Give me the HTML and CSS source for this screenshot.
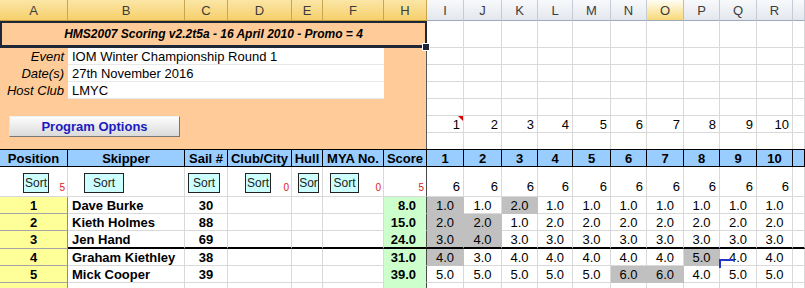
FILE: index.html
```html
<!DOCTYPE html>
<html lang="en">
<head>
    <meta charset="UTF-8">
    <title>HMS2007 Scoring</title>
    <link rel="stylesheet" href="styles.css">
</head>
<body>

    <div class="sheet">
        <!-- Column letters -->
        <div class="c colhead sel">A</div>
        <div class="c colhead sel">B</div>
        <div class="c colhead sel">C</div>
        <div class="c colhead sel">D</div>
        <div class="c colhead sel">E</div>
        <div class="c colhead sel">F</div>
        <div class="c colhead sel hcol">H</div>
        <div class="c colhead">I</div>
        <div class="c colhead">J</div>
        <div class="c colhead">K</div>
        <div class="c colhead">L</div>
        <div class="c colhead">M</div>
        <div class="c colhead">N</div>
        <div class="c colhead hot">O</div>
        <div class="c colhead">P</div>
        <div class="c colhead">Q</div>
        <div class="c colhead">R</div>
        <div class="c colhead"></div>

        <!-- Event details panel -->
        <div class="panel">
            <div class="title">HMS2007 Scoring v2.2t5a - 16 April 2010 - Promo = 4</div>
            <div class="info">
                <div class="label">Event</div>
                <div class="value">IOM Winter Championship Round 1</div>
                <div class="label">Date(s)</div>
                <div class="value">27th November 2016</div>
                <div class="label">Host Club</div>
                <div class="value">LMYC</div>
            </div>
            <button type="button" class="options-btn">Program Options</button>
        </div>

        <!-- Empty cells right of the panel -->
        <div class="c"></div><div class="c"></div><div class="c"></div><div class="c"></div><div class="c"></div><div class="c"></div><div class="c"></div><div class="c"></div><div class="c"></div><div class="c"></div><div class="c"></div>
        <div class="c"></div><div class="c"></div><div class="c"></div><div class="c"></div><div class="c"></div><div class="c"></div><div class="c"></div><div class="c"></div><div class="c"></div><div class="c"></div><div class="c"></div>
        <div class="c"></div><div class="c"></div><div class="c"></div><div class="c"></div><div class="c"></div><div class="c"></div><div class="c"></div><div class="c"></div><div class="c"></div><div class="c"></div><div class="c"></div>
        <div class="c"></div><div class="c"></div><div class="c"></div><div class="c"></div><div class="c"></div><div class="c"></div><div class="c"></div><div class="c"></div><div class="c"></div><div class="c"></div><div class="c"></div>
        <div class="c"></div><div class="c"></div><div class="c"></div><div class="c"></div><div class="c"></div><div class="c"></div><div class="c"></div><div class="c"></div><div class="c"></div><div class="c"></div><div class="c"></div>
        <div class="c num note">1</div>
        <div class="c num">2</div>
        <div class="c num">3</div>
        <div class="c num">4</div>
        <div class="c num">5</div>
        <div class="c num">6</div>
        <div class="c num">7</div>
        <div class="c num">8</div>
        <div class="c num">9</div>
        <div class="c num">10</div>
        <div class="c"></div>
        <div class="c"></div><div class="c"></div><div class="c"></div><div class="c"></div><div class="c"></div><div class="c"></div><div class="c"></div><div class="c"></div><div class="c"></div><div class="c"></div><div class="c"></div>

        <!-- Results header -->
        <div class="c hd">Position</div>
        <div class="c hd">Skipper</div>
        <div class="c hd">Sail #</div>
        <div class="c hd">Club/City</div>
        <div class="c hd">Hull</div>
        <div class="c hd">MYA No.</div>
        <div class="c hd">Score</div>
        <div class="c hd">1</div>
        <div class="c hd">2</div>
        <div class="c hd">3</div>
        <div class="c hd">4</div>
        <div class="c hd">5</div>
        <div class="c hd">6</div>
        <div class="c hd">7</div>
        <div class="c hd">8</div>
        <div class="c hd">9</div>
        <div class="c hd">10</div>
        <div class="c hd"></div>

        <!-- Sort buttons -->
        <div class="c srt"><button type="button" class="sort-btn btn-a">Sort</button><span class="count">5</span></div>
        <div class="c srt"><button type="button" class="sort-btn btn-b">Sort</button></div>
        <div class="c srt"><button type="button" class="sort-btn btn-c">Sort</button></div>
        <div class="c srt"><button type="button" class="sort-btn btn-d">Sort</button><span class="count">0</span></div>
        <div class="c srt"><button type="button" class="sort-btn btn-e">Sor</button></div>
        <div class="c srt"><button type="button" class="sort-btn btn-f">Sort</button><span class="count">0</span></div>
        <div class="c srt hcol"><span class="count">5</span></div>
        <div class="c srt"><span class="six">6</span></div>
        <div class="c srt"><span class="six">6</span></div>
        <div class="c srt"><span class="six">6</span></div>
        <div class="c srt"><span class="six">6</span></div>
        <div class="c srt"><span class="six">6</span></div>
        <div class="c srt"><span class="six">6</span></div>
        <div class="c srt"><span class="six">6</span></div>
        <div class="c srt"><span class="six">6</span></div>
        <div class="c srt"><span class="six">6</span></div>
        <div class="c srt"><span class="six">6</span></div>
        <div class="c srt"></div>

        <!-- Results -->
        <div class="c pos">1</div>
        <div class="c name">Dave Burke</div>
        <div class="c sail">30</div>
        <div class="c"></div><div class="c"></div><div class="c"></div>
        <div class="c score hcol">8.0</div>
        <div class="c r g">1.0</div><div class="c r">1.0</div><div class="c r g">2.0</div><div class="c r">1.0</div><div class="c r">1.0</div>
        <div class="c r">1.0</div><div class="c r">1.0</div><div class="c r">1.0</div><div class="c r">1.0</div><div class="c r">1.0</div>
        <div class="c"></div>

        <div class="c pos">2</div>
        <div class="c name">Kieth Holmes</div>
        <div class="c sail">88</div>
        <div class="c"></div><div class="c"></div><div class="c"></div>
        <div class="c score hcol">15.0</div>
        <div class="c r g">2.0</div><div class="c r g">2.0</div><div class="c r">1.0</div><div class="c r">2.0</div><div class="c r">2.0</div>
        <div class="c r">2.0</div><div class="c r">2.0</div><div class="c r">2.0</div><div class="c r">2.0</div><div class="c r">2.0</div>
        <div class="c"></div>

        <div class="c pos">3</div>
        <div class="c name thick">Jen Hand</div>
        <div class="c sail thick">69</div>
        <div class="c thick"></div><div class="c thick"></div><div class="c thick"></div>
        <div class="c score hcol thick">24.0</div>
        <div class="c r g thick">3.0</div><div class="c r g thick">4.0</div><div class="c r thick">3.0</div><div class="c r thick">3.0</div><div class="c r thick">3.0</div>
        <div class="c r thick">3.0</div><div class="c r thick">3.0</div><div class="c r thick">3.0</div><div class="c r thick">3.0</div><div class="c r thick">3.0</div>
        <div class="c thick"></div>

        <div class="c pos">4</div>
        <div class="c name">Graham Kiethley</div>
        <div class="c sail">38</div>
        <div class="c"></div><div class="c"></div><div class="c"></div>
        <div class="c score hcol">31.0</div>
        <div class="c r g">4.0</div><div class="c r">3.0</div><div class="c r">4.0</div><div class="c r">4.0</div><div class="c r">4.0</div>
        <div class="c r">4.0</div><div class="c r">4.0</div><div class="c r g">5.0</div><div class="c r">4.0</div><div class="c r">4.0</div>
        <div class="c"></div>

        <div class="c pos">5</div>
        <div class="c name">Mick Cooper</div>
        <div class="c sail">39</div>
        <div class="c"></div><div class="c"></div><div class="c"></div>
        <div class="c score hcol">39.0</div>
        <div class="c r">5.0</div><div class="c r">5.0</div><div class="c r">5.0</div><div class="c r">5.0</div><div class="c r">5.0</div>
        <div class="c r g">6.0</div><div class="c r g">6.0</div><div class="c r">4.0</div><div class="c r">5.0</div><div class="c r">5.0</div>
        <div class="c"></div>

        <div class="c pos"></div>
        <div class="c"></div><div class="c"></div><div class="c"></div><div class="c"></div><div class="c"></div>
        <div class="c score hcol"></div>
        <div class="c"></div><div class="c"></div><div class="c"></div><div class="c"></div><div class="c"></div>
        <div class="c"></div><div class="c"></div><div class="c"></div><div class="c"></div><div class="c"></div>
        <div class="c"></div>

        <div class="cursor-mark"></div>
    </div>

</body>
</html>
```

FILE: styles.css
```css
/* General Styles */
* {
    margin: 0;
    padding: 0;
    box-sizing: border-box;
}

body {
    background-color: #fff;
    font-family: "Liberation Sans", Arial, sans-serif;
    font-size: 13px;
    color: #000;
    overflow: hidden;
}

/* Spreadsheet grid */
.sheet {
    position: relative;
    display: grid;
    width: 805px;
    grid-template-columns: 68px 117px 43px 64px 31px 61px 43px 37px 38px 36px 35px 38px 36px 37px 36px 37px 36px 12px;
    grid-template-rows: 21px 27px 17px 17px 17px 17px 17px 17px 17px 30px 17px 17px 18px 17px 17px 17px;
}

.c {
    display: flex;
    align-items: center;
    padding: 0 3px;
    white-space: nowrap;
    overflow: hidden;
    border-right: 1px solid #d9d9d9;
    border-bottom: 1px solid #d9d9d9;
}

/* Column letters */
.colhead {
    justify-content: center;
    color: #3c3c3c;
    background: linear-gradient(#f8f9fb, #e3e7ed);
    border-right-color: #c6ccd5;
    border-bottom-color: #9eaabb;
}

.colhead.sel {
    background: linear-gradient(#fbe6a6, #f6d06c);
    border-right-color: #c8a550;
    border-bottom-color: #c49a3a;
}

.colhead.hot {
    background: linear-gradient(#fffef5, #f8d877);
    border-right-color: #d9be72;
}

/* Event details panel */
.panel {
    grid-column: 1 / 8;
    grid-row: 2 / 9;
    background-color: #ffcc99;
    border-right: 1px solid #5a5a5a;
}

.title {
    position: relative;
    height: 27px;
    margin-right: -1px;
    display: flex;
    align-items: center;
    justify-content: center;
    font-size: 12px;
    font-weight: bold;
    font-style: italic;
    border: 2px solid #1d2738;
    border-bottom-width: 3px;
}

.title::after {
    content: "";
    position: absolute;
    right: -5px;
    bottom: -6px;
    width: 6px;
    height: 6px;
    background-color: #1d2738;
    border: 1px solid #fff;
}

.info {
    display: grid;
    grid-template-columns: 68px 316px;
    grid-auto-rows: 17px;
}

.info .label {
    display: flex;
    align-items: center;
    justify-content: flex-end;
    padding-right: 4px;
    font-style: italic;
}

.info .value {
    display: flex;
    align-items: center;
    padding-left: 4px;
    background-color: #fff;
    border-bottom: 1px solid #e8e8e8;
}

.options-btn {
    display: block;
    width: 171px;
    height: 21px;
    margin: 17px 0 0 9px;
    font-family: inherit;
    font-size: 13px;
    font-weight: bold;
    color: #1c1cbe;
    background: linear-gradient(#fdfdfd, #dadada);
    border: 1px solid;
    border-color: #f2f2f2 #777 #777 #e2e2e2;
}

/* Race number row */
.num {
    justify-content: flex-end;
}

.note {
    position: relative;
}

.note::after {
    content: "";
    position: absolute;
    top: 0;
    right: 0;
    border-top: 5px solid #e00000;
    border-left: 5px solid transparent;
}

/* Results header */
.hd {
    justify-content: center;
    font-weight: bold;
    background-color: #99ccff;
    margin-top: -1px;
    border-top: 1px solid #000;
    border-right-color: #000;
    border-bottom-color: #000;
}

/* Sort row */
.srt {
    align-items: flex-end;
    padding: 0 2px 2px 0;
}

.sort-btn {
    height: 20px;
    margin-bottom: 1px;
    font-family: inherit;
    font-size: 12px;
    color: #222;
    background-color: #ccffff;
    border: 1px solid #222;
    overflow: hidden;
    white-space: nowrap;
}

.btn-a { width: 26px; margin-left: 23px; }
.btn-b { width: 40px; margin-left: 16px; }
.btn-c { width: 32px; margin-left: 3px; }
.btn-d { width: 26px; margin-left: 17px; }
.btn-e { width: 21px; margin-left: 6px; }
.btn-f { width: 29px; margin-left: 7px; }

.count {
    margin-left: auto;
    font-size: 10px;
    line-height: 12px;
    color: #e02020;
}

.six {
    margin-left: auto;
    padding-right: 1px;
}

/* Results rows */
.pos {
    justify-content: center;
    font-weight: bold;
    background-color: #ffff99;
    border-right-color: #8c8c8c;
    border-bottom-color: #a6a6a6;
}

.name {
    font-weight: bold;
    padding-left: 4px;
}

.sail {
    justify-content: center;
    font-weight: bold;
}

.score {
    justify-content: flex-end;
    padding-right: 10px;
    font-weight: bold;
    background-color: #ccffcc;
    border-bottom-color: transparent;
}

.hcol {
    border-right-color: #4a4a4a;
}

.r {
    justify-content: center;
}

.g {
    background-color: #c0c0c0;
    border-color: transparent;
}

.thick {
    border-bottom: 2px solid #000;
}

.cursor-mark {
    position: absolute;
    left: 719px;
    top: 259px;
    width: 15px;
    height: 9px;
    border-top: 2px solid #2436c8;
    border-left: 2px solid #2436c8;
}
```
